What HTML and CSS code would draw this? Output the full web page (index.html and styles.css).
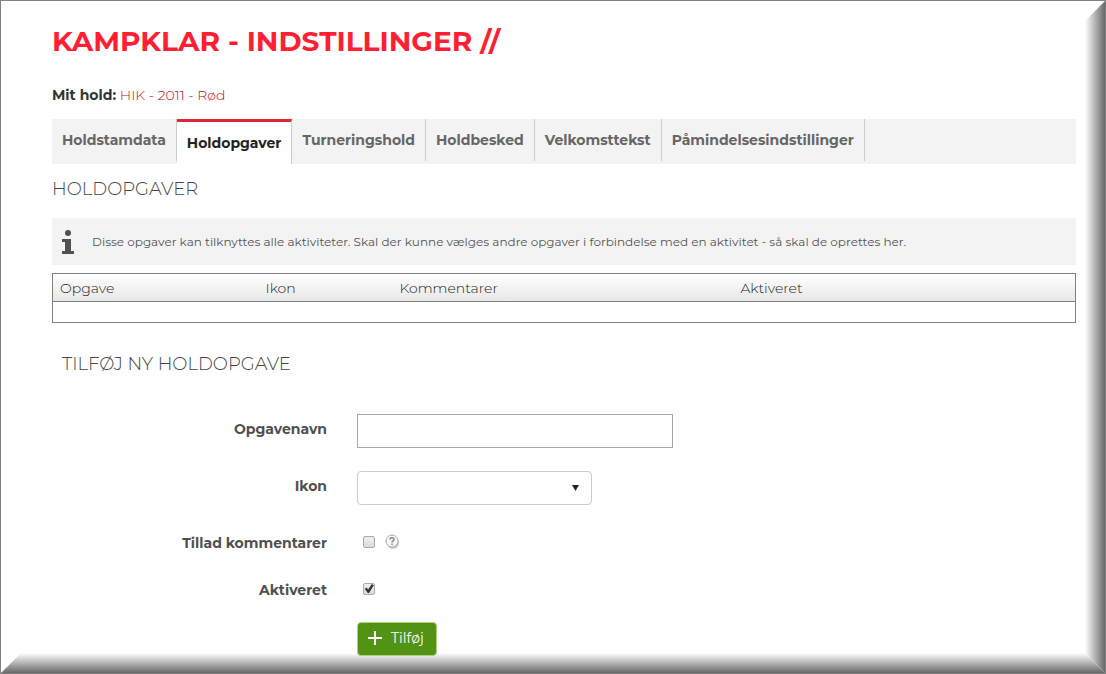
FILE: index.html
```html
<!DOCTYPE html>
<html lang="da">
<head>
<meta charset="utf-8">
<meta name="viewport" content="width=device-width, initial-scale=1">
<title>Kampklar - Indstillinger</title>
<link rel="stylesheet" href="styles.css">
</head>
<body>
<div class="frame">
  <main class="page">
    <h1 class="title">KAMPKLAR - INDSTILLINGER //</h1>
    <p class="team"><strong>Mit hold:</strong> <a class="team-link" href="#">HIK - 2011 - Rød</a></p>

    <nav class="tabs">
      <a class="tab" href="#">Holdstamdata</a>
      <a class="tab tab-active" href="#" aria-current="page">Holdopgaver</a>
      <a class="tab" href="#">Turneringshold</a>
      <a class="tab" href="#">Holdbesked</a>
      <a class="tab" href="#">Velkomsttekst</a>
      <a class="tab" href="#">Påmindelsesindstillinger</a>
    </nav>

    <h2 class="heading">HOLDOPGAVER</h2>

    <div class="info">
      <svg class="info-icon" viewBox="0 0 12 24" aria-hidden="true">
        <circle cx="6" cy="3" r="3"/>
        <path d="M0 9h9v12h3v3H0v-3h3v-9H0z"/>
      </svg>
      <p class="info-text">Disse opgaver kan tilknyttes alle aktiviteter. Skal der kunne vælges andre opgaver i forbindelse med en aktivitet - så skal de oprettes her.</p>
    </div>

    <table class="tasks">
      <colgroup><col class="col-task"><col class="col-icon"><col class="col-comments"><col class="col-active"></colgroup>
      <thead>
        <tr><th scope="col">Opgave</th><th scope="col">Ikon</th><th scope="col">Kommentarer</th><th scope="col">Aktiveret</th></tr>
      </thead>
      <tbody>
        <tr><td colspan="4"></td></tr>
      </tbody>
    </table>

    <form class="form">
      <h2 class="heading form-heading">TILFØJ NY HOLDOPGAVE</h2>
      <div class="row">
        <label class="label" for="name">Opgavenavn</label>
        <input class="text" id="name" type="text">
      </div>
      <div class="row">
        <label class="label" for="icon">Ikon</label>
        <div class="select-wrap">
          <select class="select" id="icon"><option></option></select>
          <svg class="arrow" viewBox="0 0 8 7" aria-hidden="true"><path d="M0 0h8L4 7z"/></svg>
        </div>
      </div>
      <div class="row row-check">
        <label class="label" for="comments">Tillad kommentarer</label>
        <div class="checks">
          <input class="check" id="comments" type="checkbox">
          <svg class="help" viewBox="0 0 16 16" role="img" aria-label="Hjælp">
            <circle cx="8" cy="9" r="6" fill="#ccc"/>
            <circle cx="7" cy="7" r="6" fill="#f8f8f8" stroke="#aaa"/>
            <path d="M5 5.500C5 3.200 9 3.200 9 5.500C9 7 7 6.800 7 8.500M7 9.500V11" fill="none" stroke="#888" stroke-width="1.500"/>
          </svg>
        </div>
      </div>
      <div class="row row-check">
        <label class="label" for="active">Aktiveret</label>
        <div class="checks">
          <input class="check" id="active" type="checkbox" checked>
        </div>
      </div>
      <div class="actions">
        <button class="add" type="button">
          <svg class="plus" viewBox="0 0 14 14" aria-hidden="true"><path d="M7 0v14M0 7h14"/></svg>
          Tilføj
        </button>
      </div>
    </form>
  </main>
</div>
</body>
</html>
```

FILE: styles.css
```css
* { box-sizing: border-box; }

body {
  margin: 0;
  background: #fff;
  color: #333;
  font: 14px/20px Montserrat, Inter, "Open Sans", sans-serif;
}

h1, h2, p { margin: 0; }

/* Bevelled frame: thin outline, shaded right and bottom edges */
.frame {
  position: relative;
  min-height: 100vh;
  border: 1px solid #808080;
}

.frame::before,
.frame::after {
  content: "";
  position: absolute;
  right: 0;
  bottom: 0;
  pointer-events: none;
}

.frame::before {
  top: 0;
  width: 20px;
  background: linear-gradient(to right, #fff, #686868);
  clip-path: polygon(100% 0, 100% 100%, 0 calc(100% - 20px), 0 20px);
}

.frame::after {
  left: 0;
  height: 20px;
  background: linear-gradient(#fff, #686868);
  clip-path: polygon(20px 0, calc(100% - 20px) 0, 100% 100%, 0 100%);
}

.page { padding: 22px 29px 16px 51px; }

.title {
  color: #ff1e32;
  font-size: 28px;
  line-height: 36px;
  font-weight: 700;
}

.team { padding: 26px 0 14px; }
.team strong { font-weight: 700; }
.team-link { color: #c0101c; font-weight: 300; text-decoration: none; }

.tabs {
  display: flex;
  align-items: flex-start;
  height: 45px;
  background: #f3f3f3;
}

.tab {
  padding: 11px 10px;
  border-right: 1px solid #ccc;
  color: #666;
  font-weight: 700;
  text-decoration: none;
}

.tab-active {
  border-top: 3px solid #dc2834;
  background: #fff;
  color: #222;
}

.heading {
  padding: 13px 0 16px;
  color: #444;
  font-size: 18px;
  line-height: 25px;
  font-weight: 300;
}

.info {
  display: flex;
  align-items: center;
  gap: 18px;
  min-height: 47px;
  padding: 0 10px;
  background: #f3f3f3;
}

.info-icon { width: 12px; height: 24px; flex: none; fill: #505050; }

.info-text { color: #555; font-size: 12px; font-weight: 400; }

.tasks {
  width: 100%;
  margin-top: 8px;
  border: 1px solid #808080;
  border-collapse: collapse;
  table-layout: fixed;
}

.col-task { width: 206px; }
.col-icon { width: 134px; }
.col-comments { width: 341px; }

.tasks thead { background: linear-gradient(#fff, #e6e6e6); }
.tasks th { height: 28px; padding: 0 7px; color: #222; font-weight: 300; text-align: left; }
.tasks td { height: 21px; padding: 0; border-top: 1px solid #808080; }

.form-heading { padding: 29px 10px 37px; }

.row {
  display: grid;
  grid-template-columns: 275px 1fr;
  column-gap: 30px;
  margin-bottom: 23px;
}

.label {
  padding-top: 5px;
  color: #505050;
  font-weight: 700;
  text-align: right;
}

.text {
  width: 316px;
  height: 34px;
  padding: 0 8px;
  border: 1px solid #a6a6a6;
  background: #fff;
  font: inherit;
}

.select-wrap { position: relative; width: 235px; height: 34px; }

.select {
  width: 100%;
  height: 100%;
  padding: 0 28px 0 8px;
  border: 1px solid #ccc;
  border-radius: 4px;
  appearance: none;
  background: #fff;
  font: inherit;
}

.arrow {
  position: absolute;
  top: 14px;
  right: 13px;
  width: 7px;
  height: 6px;
  fill: #222;
  pointer-events: none;
}

.row-check { margin-bottom: 20px; }

.checks {
  display: flex;
  align-items: center;
  gap: 10px;
  height: 27px;
  padding-left: 6px;
}

.check {
  display: grid;
  width: 12px;
  height: 12px;
  margin: 0;
  border: 1px solid #aaa;
  border-radius: 2px;
  appearance: none;
  background: linear-gradient(#eee, #dcdcdc);
}

.check:checked::before {
  content: "";
  background: #333;
  clip-path: polygon(8% 55%, 25% 40%, 42% 60%, 78% 4%, 98% 18%, 50% 95%, 38% 95%);
}

.help { width: 16px; height: 16px; }

.actions { padding-left: 305px; }

.add {
  position: relative;
  z-index: 1;
  display: flex;
  align-items: center;
  gap: 9px;
  height: 34px;
  padding: 0 12px 2px 10px;
  border: 1px solid #b4cf7a;
  border-radius: 4px;
  background: #529214;
  color: #fff;
  font: inherit;
}

.plus { width: 14px; height: 14px; fill: none; stroke: #fff; stroke-width: 2; }
```
